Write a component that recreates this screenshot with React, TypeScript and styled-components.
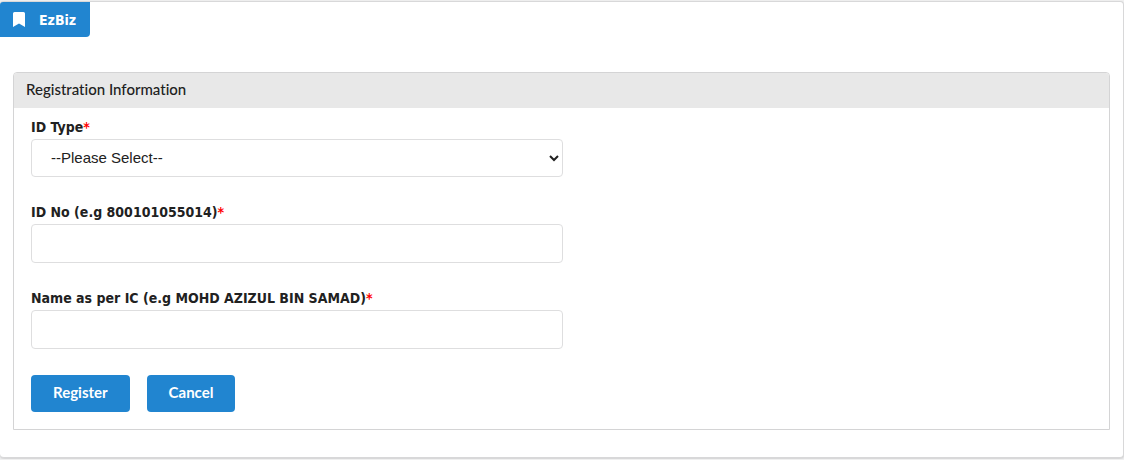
import React from "react";
import styled, { createGlobalStyle } from "styled-components";

const GlobalStyle = createGlobalStyle`
  *, *::before, *::after { box-sizing: border-box; }
  body {
    margin: 0;
    background: #f0f0f0;
    color: #212121;
    font-family: Lato, "Liberation Sans", sans-serif;
    font-size: 14px;
    line-height: 18px;
    font-variant-ligatures: none;
  }
`;

const Segment = styled.main`
  margin: 1px 0;
  padding-bottom: 27px;
  background: #fff;
  border: 1px solid #d8d8d9;
  border-left: 0;
  border-radius: 4px;
  box-shadow: 0 1px 2px rgba(34, 36, 38, 0.15);
`;

const Ribbon = styled.div`
  display: inline-flex;
  align-items: center;
  gap: 14px;
  height: 35px;
  padding: 0 14px 0 13px;
  background: #2185d0;
  color: #fff;
  border-radius: 3px 0 4px 0;
  font-family: "DejaVu Sans Condensed", "DejaVu Sans", sans-serif;
  font-size: 14px;
  font-weight: 700;
  vertical-align: top;
`;

const Panel = styled.section`
  margin: 35px 13px 0;
  border: 1px solid #d4d4d5;
  border-radius: 4px 4px 0 0;
`;

const PanelHeader = styled.h1`
  margin: 0;
  padding: 7px 12px 10px;
  background: #e8e8e8;
  border-radius: 3px 3px 0 0;
  font-size: 15px;
  font-weight: 500;
  line-height: 18px;
`;

const Form = styled.form`
  padding: 10px 14px 17px 17px;
`;

const Field = styled.div`
  width: 50%;
  margin-bottom: 26px;
`;

const Label = styled.label`
  display: block;
  margin-bottom: 3px;
  font-family: "DejaVu Sans Condensed", "DejaVu Sans", sans-serif;
  font-size: 14px;
  font-weight: 700;
  line-height: 18px;
`;

const Required = styled.span`
  color: #f00;
`;

const controlStyle = `
  display: block;
  width: 100%;
  background-color: #fff;
  border: 1px solid #dededf;
  border-radius: 4px;
  color: #212121;
`;

const TextInput = styled.input`
  ${controlStyle}
  height: 39px;
  padding: 0 14px;
  font: 14px/18px Lato, sans-serif;
`;

const Select = styled.select`
  ${controlStyle}
  height: 38px;
  padding: 0 0 1px 15px;
  font: 15px/18px "Liberation Sans", Arial, sans-serif;
`;

const Actions = styled.div`
  display: flex;
  gap: 17px;
`;

const Button = styled.button`
  height: 37px;
  padding: 0 22px 3px;
  background: #2185d0;
  border: 0;
  border-radius: 4px;
  color: #fff;
  font: 700 15px/18px Lato, sans-serif;
  cursor: pointer;
`;

function BookmarkIcon() {
  return (
    <svg width="12" height="15" viewBox="0 0 12 15" fill="#fff" aria-hidden="true">
      <path d="M1.5 0h9Q12 0 12 1.5V15L6 11.5 0 15V1.5Q0 0 1.5 0Z" />
    </svg>
  );
}

export default function App() {
  return (
    <>
      <GlobalStyle />
      <Segment>
        <Ribbon>
          <BookmarkIcon />
          EzBiz
        </Ribbon>
        <Panel>
          <PanelHeader>Registration Information</PanelHeader>
          <Form onSubmit={(event) => event.preventDefault()}>
            <Field>
              <Label htmlFor="id-type">
                ID Type<Required>*</Required>
              </Label>
              <Select id="id-type" defaultValue="">
                <option value="">--Please Select--</option>
              </Select>
            </Field>
            <Field>
              <Label htmlFor="id-no">
                ID No (e.g 800101055014)<Required>*</Required>
              </Label>
              <TextInput id="id-no" type="text" />
            </Field>
            <Field>
              <Label htmlFor="name">
                Name as per IC (e.g MOHD AZIZUL BIN SAMAD)<Required>*</Required>
              </Label>
              <TextInput id="name" type="text" />
            </Field>
            <Actions>
              <Button type="submit">Register</Button>
              <Button type="button">Cancel</Button>
            </Actions>
          </Form>
        </Panel>
      </Segment>
    </>
  );
}
